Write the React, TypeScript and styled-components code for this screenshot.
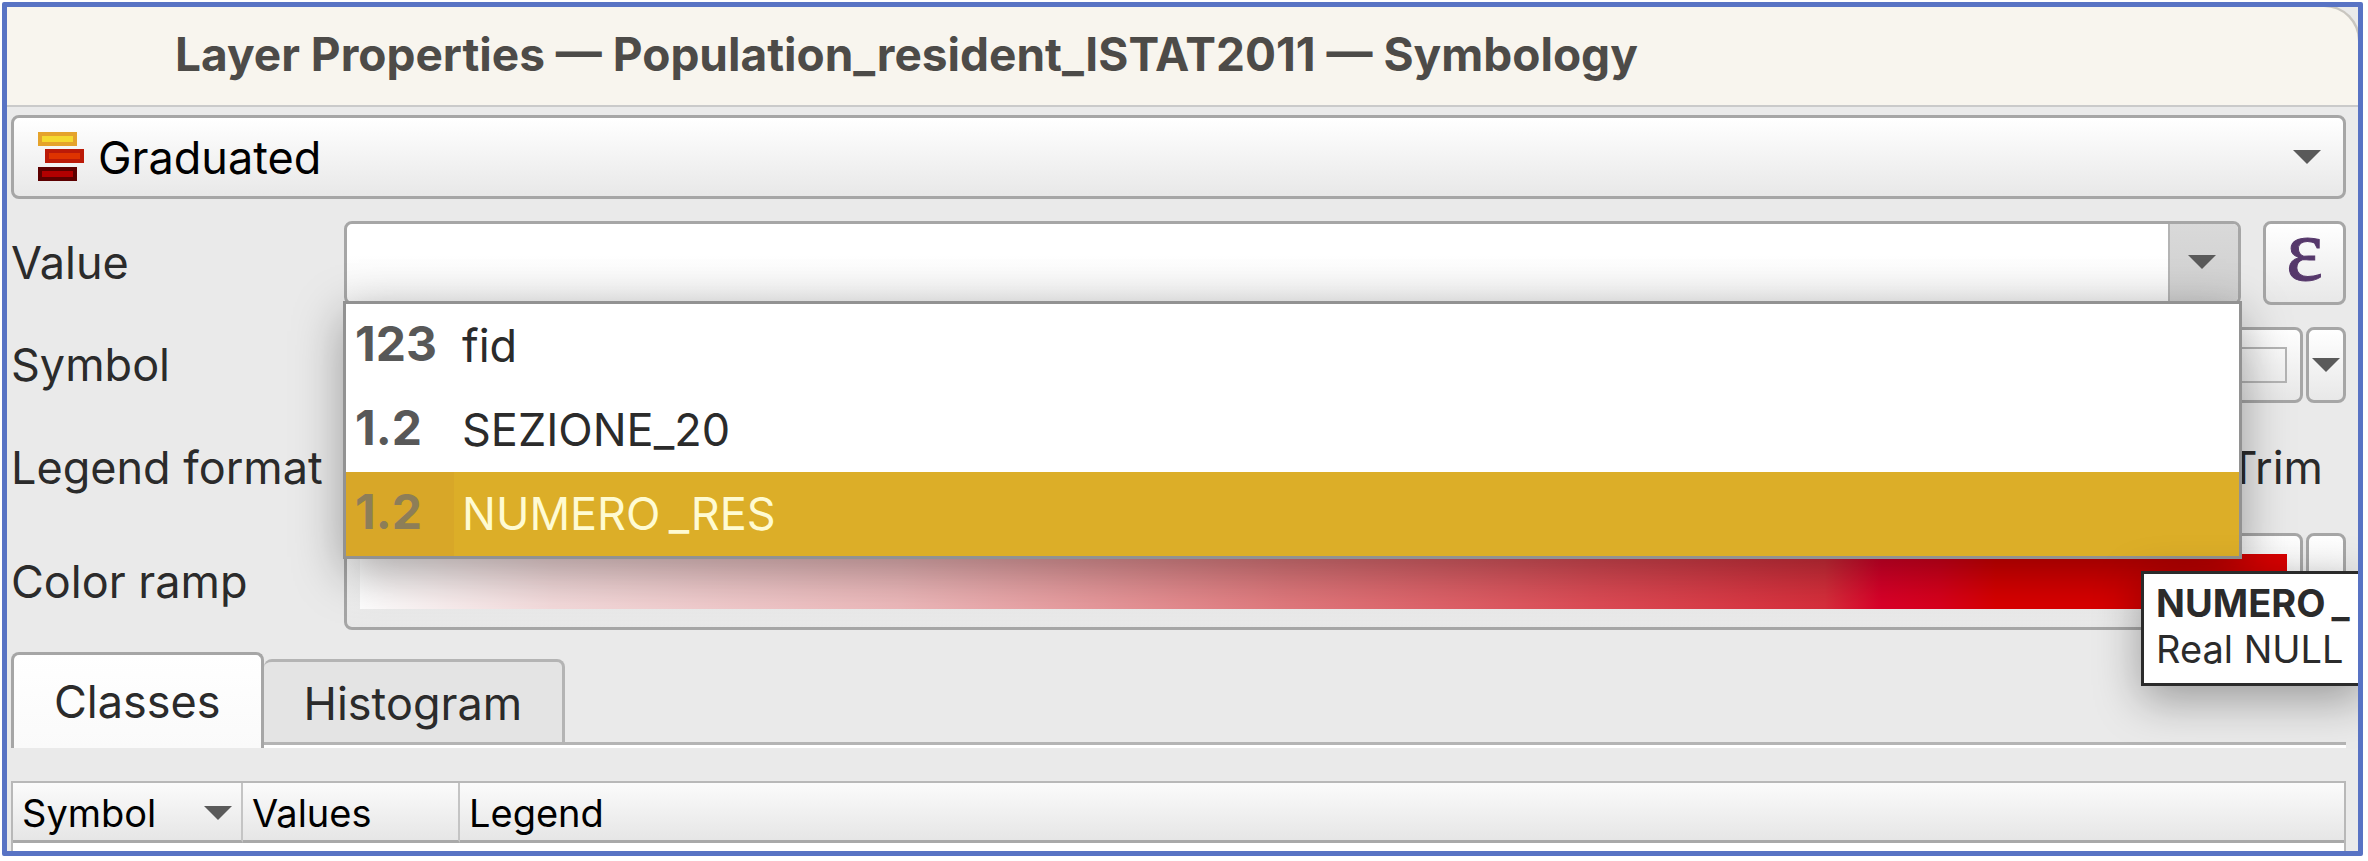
import React, { useState } from "react";
import styled, { createGlobalStyle } from "styled-components";

const line = "#a6a6a6";

const GlobalStyle = createGlobalStyle`
  *, *::before, *::after { box-sizing: border-box; }
  body {
    margin: 0;
    background: #fff;
    color: #2b2b2b;
    font-family: Inter, "Liberation Sans", sans-serif;
    font-size: 45px;
    line-height: 54px;
  }
  button, input, select { font: inherit; color: inherit; margin: 0; }
`;

const Page = styled.div`
  padding: 2px 5px 6px 2px;
`;

const Window = styled.main`
  position: relative;
  overflow: hidden;
  border: 5px solid #5873c4;
  border-radius: 2px;
  background: #eaeaea;
`;

const TitleBar = styled.header`
  display: flex;
  align-items: center;
  height: 100px;
  padding: 0 168px 4px;
  background: #f8f5ee;
  border-bottom: 2px solid #cacaca;
  border-radius: 0 34px 0 0;
  box-shadow: 1px -1px 0 1px #c9c6c0;
`;

const Title = styled.h1`
  margin: 0;
  color: #4d4b48;
  font-size: 46px;
  font-weight: 700;
  line-height: 54px;
  white-space: nowrap;
`;

const Body = styled.div`
  display: flex;
  flex-direction: column;
  gap: 22px;
  padding: 8px 12px 0 4px;
`;

const Box = styled.div`
  border: 3px solid ${line};
  border-radius: 8px;
  background: linear-gradient(#fff, #e8e8e8);
`;

const RendererBox = styled(Box)`
  display: flex;
  align-items: center;
  height: 84px;
  padding: 0 22px 0 24px;
  color: #000;
`;

const RendererSelect = styled.select`
  flex: 1;
  appearance: none;
  border: 0;
  outline: 0;
  padding: 2px 0 0 12px;
  background: none;
`;

const Form = styled.div`
  display: grid;
  grid-template-columns: 333px minmax(0, 1fr);
  row-gap: 22px;
  align-items: center;
`;

const Label = styled.label`
  white-space: nowrap;
`;

const Field = styled.div<{ $gap?: number; $height: number }>`
  display: flex;
  gap: ${(p) => p.$gap ?? 3}px;
  height: ${(p) => p.$height}px;
`;

const ValueCombo = styled(Box)`
  position: relative;
  flex: 1;
  display: flex;
  background: linear-gradient(#fff 40%, #f4f4f4);
`;

const ValueInput = styled.input`
  flex: 1;
  min-width: 0;
  border: 0;
  outline: 0;
  padding: 0 12px;
  background: none;
`;

const OpenButton = styled.button`
  width: 70px;
  padding: 0 4px 2px 0;
  border: 0;
  border-left: 2px solid #b4b4b4;
  border-radius: 0 5px 5px 0;
  background: linear-gradient(#d9d9d9, #cfcfcf);
  display: grid;
  place-items: center;
`;

const Popup = styled.ul`
  position: absolute;
  z-index: 2;
  top: calc(100% - 1px);
  left: -4px;
  right: -4px;
  margin: 0;
  padding: 0;
  list-style: none;
  border: 3px solid #929292;
  background: #fff;
  box-shadow: 0 14px 46px rgba(0, 0, 0, 0.34);
`;

const Option = styled.li<{ $selected: boolean }>`
  display: flex;
  align-items: center;
  height: 84px;
  background: ${(p) => (p.$selected ? "#dcae28" : "#fff")};
  color: ${(p) => (p.$selected ? "#fffbd2" : "#2b2b2b")};
`;

const TypeTag = styled.span<{ $selected: boolean }>`
  width: 108px;
  height: 84px;
  padding: 0 9px;
  font-size: 48px;
  font-weight: 700;
  line-height: 80px;
  color: ${(p) => (p.$selected ? "#8d7e58" : "#585858")};
  background: ${(p) => (p.$selected ? "#d8a728" : "transparent")};
`;

const OptionName = styled.span`
  padding-left: 8px;
`;

const PushButton = styled.button<{ $width?: number }>`
  display: flex;
  align-items: center;
  justify-content: center;
  flex: ${(p) => (p.$width ? `0 0 ${p.$width}px` : "1")};
  padding: 0;
  border: 3px solid ${line};
  border-radius: 8px;
  background: linear-gradient(#fff, #e8e8e8);
`;

const ExpressionButton = styled(PushButton)`
  padding-bottom: 24px;
  color: #56386b;
  font-family: "Liberation Serif", serif;
  font-size: 88px;
  line-height: 60px;
  -webkit-text-stroke: 1px #56386b;
`;

const SymbolSwatch = styled.span`
  flex: 1;
  height: 36px;
  margin: 0 13px;
  border: 2px solid #b4b4b4;
`;

const Ramp = styled.span`
  flex: 1;
  align-self: stretch;
  margin: 18px 13px;
  background: linear-gradient(
    90deg,
    #fff 0%,
    #f6dcdd 10%,
    #efbabc 28%,
    #e37a7e 48%,
    #df4c56 64%,
    #d92f3c 76%,
    #dc0029 79%,
    #da001c 82%,
    #da0000 85%
  );
`;

const TrimField = styled.div`
  display: flex;
  align-items: center;
  justify-content: flex-end;
  gap: 12px;
  height: 86px;
  padding-right: 23px;
`;

const TrimBox = styled.input`
  width: 32px;
  height: 32px;
`;

const Tooltip = styled.div`
  position: absolute;
  z-index: 3;
  top: 564px;
  right: -8px;
  width: 225px;
  padding: 6px 0 11px 12px;
  border: 3px solid #2b2b2b;
  background: #fff;
  font-size: 38px;
  line-height: 46px;
  white-space: nowrap;
  box-shadow: 0 14px 46px rgba(0, 0, 0, 0.34);
`;

const TabBar = styled.div`
  display: flex;
  align-items: flex-end;
  height: 96px;
  border-bottom: 3px solid #fff;
  box-shadow: inset 0 -3px 0 #b4b4b4;
`;

const Tab = styled.button<{ $active: boolean }>`
  height: ${(p) => (p.$active ? 96 : 86)}px;
  margin-bottom: ${(p) => (p.$active ? -3 : 0)}px;
  padding: ${(p) => (p.$active ? "0 40px" : "4px 40px 0")};
  align-self: ${(p) => (p.$active ? "flex-start" : "flex-end")};
  border: 3px solid ${(p) => (p.$active ? line : "#b4b4b4")};
  border-bottom-width: ${(p) => (p.$active ? 0 : 3)}px;
  border-left-width: ${(p) => (p.$active ? 3 : 0)}px;
  border-radius: 8px 8px 0 0;
  background: ${(p) => (p.$active ? "linear-gradient(#fff, #fafafa)" : "#e4e4e4")};
`;

const ClassTable = styled.table`
  width: 100%;
  margin-top: 11px;
  border: 2px solid #b8b8b8;
  border-bottom: 0;
  border-spacing: 0;
  table-layout: fixed;
  background: #fff;
`;

const HeadCell = styled.th<{ $width?: number }>`
  width: ${(p) => (p.$width ? `${p.$width}px` : "auto")};
  height: 60px;
  padding: 2px 9px 0;
  border-right: 2px solid #c4c4c4;
  border-bottom: 3px solid #a9a9a9;
  background: linear-gradient(#fbfbfb, #e6e6e6);
  color: #000;
  font-size: 38px;
  font-weight: 400;
  line-height: 46px;
  text-align: left;
  &:last-child { border-right: 0; }
`;

const HeadLabel = styled.span`
  display: flex;
  align-items: center;
  justify-content: space-between;
`;

const BodyCell = styled.td`
  height: 8px;
  padding: 0;
`;

function Arrow() {
  return (
    <svg width="28" height="14" viewBox="0 0 28 14" aria-hidden="true">
      <path d="M0 0H28L14 14Z" fill="#5a5a5a" />
    </svg>
  );
}

function GraduatedIcon() {
  return (
    <svg width="48" height="50" viewBox="0 0 48 50" aria-hidden="true">
      <rect x="2" y="2" width="35" height="10" fill="#f5d92f" stroke="#e5a32b" strokeWidth="4" />
      <rect x="9" y="19" width="35" height="10" fill="#de3300" stroke="#bb1a08" strokeWidth="4" />
      <rect x="2" y="37" width="35" height="10" fill="#b10000" stroke="#5c0000" strokeWidth="4" />
    </svg>
  );
}

const fields = [
  { type: "123", name: "fid" },
  { type: "1.2", name: "SEZIONE_20" },
  { type: "1.2", name: "NUMERO\u2009_RES" },
];

export default function App() {
  const [highlighted, setHighlighted] = useState(2);
  const [tab, setTab] = useState("Classes");

  return (
    <Page>
      <GlobalStyle />
      <Window>
        <TitleBar>
          <Title>Layer Properties — Population_resident_ISTAT2011 — Symbology</Title>
        </TitleBar>
        <Body>
          <RendererBox>
            <GraduatedIcon />
            <RendererSelect aria-label="Renderer">
              <option>Graduated</option>
            </RendererSelect>
            <Arrow />
          </RendererBox>

          <Form>
            <Label htmlFor="value">Value</Label>
            <Field $gap={22} $height={84}>
              <ValueCombo>
                <ValueInput id="value" type="text" />
                <OpenButton type="button" aria-label="Show fields">
                  <Arrow />
                </OpenButton>
                <Popup role="listbox" aria-label="Fields">
                  {fields.map((f, i) => (
                    <Option
                      key={f.name}
                      role="option"
                      aria-selected={i === highlighted}
                      $selected={i === highlighted}
                      onMouseEnter={() => setHighlighted(i)}
                    >
                      <TypeTag $selected={i === highlighted}>{f.type}</TypeTag>
                      <OptionName>{f.name}</OptionName>
                    </Option>
                  ))}
                </Popup>
              </ValueCombo>
              <ExpressionButton type="button" $width={83} aria-label="Expression">
                ε
              </ExpressionButton>
            </Field>

            <Label htmlFor="symbol">Symbol</Label>
            <Field $height={76}>
              <PushButton type="button" id="symbol">
                <SymbolSwatch />
              </PushButton>
              <PushButton type="button" $width={40} aria-label="Symbol options">
                <Arrow />
              </PushButton>
            </Field>

            <Label as="span">Legend format</Label>
            <TrimField>
              <TrimBox type="checkbox" id="trim" />
              <Label htmlFor="trim">Trim</Label>
            </TrimField>

            <Label htmlFor="ramp">Color ramp</Label>
            <Field $height={97}>
              <PushButton type="button" id="ramp">
                <Ramp />
              </PushButton>
              <PushButton type="button" $width={40} aria-label="Color ramp options">
                <Arrow />
              </PushButton>
            </Field>
          </Form>

          <TabBar role="tablist">
            {["Classes", "Histogram"].map((name) => (
              <Tab
                key={name}
                type="button"
                role="tab"
                aria-selected={tab === name}
                $active={tab === name}
                onClick={() => setTab(name)}
              >
                {name}
              </Tab>
            ))}
          </TabBar>

          <ClassTable>
            <thead>
              <tr>
                <HeadCell $width={230}>
                  <HeadLabel>
                    Symbol
                    <Arrow />
                  </HeadLabel>
                </HeadCell>
                <HeadCell $width={217}>Values</HeadCell>
                <HeadCell>Legend</HeadCell>
              </tr>
            </thead>
            <tbody>
              <tr>
                <BodyCell colSpan={3} />
              </tr>
            </tbody>
          </ClassTable>
        </Body>

        <Tooltip role="tooltip">
          <strong>NUMERO{"\u2009"}_</strong>
          <div>Real NULL</div>
        </Tooltip>
      </Window>
    </Page>
  );
}
